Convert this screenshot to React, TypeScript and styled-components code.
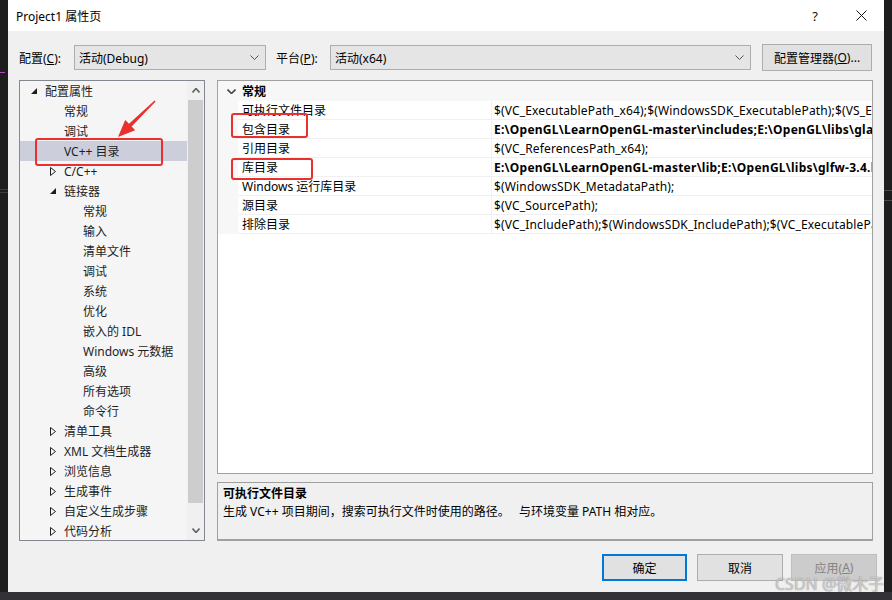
import React from "react";
import styled, { createGlobalStyle } from "styled-components";

const FONT = `"Noto Sans", "Noto Sans CJK SC", sans-serif`;

const GlobalStyle = createGlobalStyle`
  html, body { margin: 0; padding: 0; background: #1e1e1e; }
  * { box-sizing: border-box; }
`;

const Screen = styled.div`
  width: 892px;
  height: 600px;
  display: flex;
  flex-direction: column;
  background: #1e1e1e;
  position: relative;
  overflow: hidden;
  font-family: ${FONT};
  font-size: 12px;
  color: #000;
`;

const Middle = styled.div`
  display: flex;
  height: 592px;
`;

const SideStrip = styled.div<{ $w: number }>`
  width: ${(p) => p.$w}px;
  background: #1e1e1e;
  position: relative;
`;

const StripMark = styled.div<{ $top: number; $color: string; $w: number }>`
  position: absolute;
  left: 0;
  top: ${(p) => p.$top}px;
  width: ${(p) => p.$w}px;
  height: 1px;
  background: ${(p) => p.$color};
`;

const BottomStrip = styled.div`
  height: 8px;
  background: #333337;
`;

const Dialog = styled.div`
  width: 876px;
  background: #f0f0f0;
  display: flex;
  flex-direction: column;
  position: relative;
`;

const TitleBar = styled.div`
  height: 31px;
  background: #fff;
  display: flex;
  align-items: center;
  padding-left: 8px;
  font-size: 12px;
`;

const TitleText = styled.div`
  flex: 1;
`;

const TitleButton = styled.div`
  width: 46px;
  height: 31px;
  display: flex;
  align-items: center;
  justify-content: center;
  font-size: 13px;
  color: #111;
`;

const ConfigRow = styled.div`
  display: flex;
  align-items: center;
  height: 27px;
  margin-top: 13px;
  padding-left: 11px;
`;

const Label = styled.div<{ $w: number; $ml?: number }>`
  width: ${(p) => p.$w}px;
  margin-left: ${(p) => p.$ml ?? 0}px;
  white-space: nowrap;
`;

const U = styled.span`
  text-decoration: underline;
`;

const Select = styled.div<{ $w: number }>`
  width: ${(p) => p.$w}px;
  height: 25px;
  background: #e5e5e5;
  border: 1px solid #adadad;
  display: flex;
  align-items: center;
  padding: 0 6px 0 4px;
`;

const SelectText = styled.div`
  flex: 1;
`;

const Button = styled.div<{ $w: number; $ml?: number; $variant?: "default" | "primary" | "disabled" }>`
  width: ${(p) => p.$w}px;
  height: 27px;
  margin-left: ${(p) => p.$ml ?? 0}px;
  display: flex;
  align-items: center;
  justify-content: center;
  background: ${(p) => (p.$variant === "disabled" ? "#cccccc" : "#e1e1e1")};
  border: ${(p) =>
    p.$variant === "primary"
      ? "2px solid #0078d7"
      : p.$variant === "disabled"
      ? "1px solid #bfbfbf"
      : "1px solid #adadad"};
  color: ${(p) => (p.$variant === "disabled" ? "#838383" : "#000")};
  white-space: nowrap;
`;

const Body = styled.div`
  display: flex;
  gap: 12px;
  margin-top: 9px;
  padding-left: 11px;
  height: 461px;
`;

const Tree = styled.div`
  width: 186px;
  height: 461px;
  border: 1px solid #828790;
  background: #f5f5f5;
  display: flex;
`;

const TreeList = styled.div`
  flex: 1;
  display: flex;
  flex-direction: column;
  overflow: hidden;
`;

const TreeRow = styled.div<{ $level: number; $selected?: boolean }>`
  height: 20px;
  flex-shrink: 0;
  display: flex;
  align-items: center;
  padding-left: ${(p) => 25 + p.$level * 19}px;
  background: ${(p) => (p.$selected ? "#cccedb" : "transparent")};
  position: relative;
  white-space: nowrap;
  color: #1e1e1e;
`;

const Expander = styled.span`
  position: absolute;
  margin-left: -15px;
  width: 8px;
  height: 9px;
  display: flex;
  align-items: center;
  justify-content: center;
`;

const ScrollBar = styled.div`
  width: 17px;
  background: #f0f0f0;
  display: flex;
  flex-direction: column;
  align-items: center;
`;

const ScrollArrow = styled.div`
  height: 19px;
  width: 17px;
  display: flex;
  align-items: center;
  justify-content: center;
`;

const ScrollThumb = styled.div`
  width: 15px;
  height: 403px;
  background: #cdcdcd;
`;

const ScrollSpacer = styled.div`
  flex: 1;
`;

const RightCol = styled.div`
  width: 656px;
  display: flex;
  flex-direction: column;
  gap: 8px;
`;

const Grid = styled.div`
  height: 394px;
  border: 1px solid #a0a0a0;
  background: #fff;
  display: flex;
  flex-direction: column;
  overflow: hidden;
`;

const CategoryRow = styled.div`
  height: 20px;
  display: flex;
  align-items: center;
  background: #f7f7f7;
  font-weight: bold;
`;

const CategoryToggle = styled.div`
  width: 24px;
  display: flex;
  justify-content: center;
  padding-left: 3px;
`;

const PropRow = styled.div`
  height: 19px;
  display: flex;
  background: #f7f7f7;
`;

const Gutter = styled.div`
  width: 20px;
  flex-shrink: 0;
`;

const PropName = styled.div`
  width: 253px;
  flex-shrink: 0;
  background: #fff;
  border-bottom: 1px solid #f0f0f0;
  padding-left: 4px;
  display: flex;
  align-items: center;
  white-space: nowrap;
`;

const PropValue = styled.div<{ $bold?: boolean }>`
  flex: 1;
  min-width: 0;
  background: #fff;
  border-bottom: 1px solid #f0f0f0;
  border-left: 1px solid #f0f0f0;
  padding-left: 2px;
  display: flex;
  align-items: center;
  white-space: nowrap;
  overflow: hidden;
  letter-spacing: ${(p) => (p.$bold ? "0.25px" : "0.15px")};
  font-weight: ${(p) => (p.$bold ? "bold" : "normal")};
`;

const GridFill = styled.div`
  flex: 1;
  background: #fff;
`;

const Desc = styled.div`
  height: 59px;
  border: 1px solid #a0a0a0;
  border-bottom: 2px solid #a0a0a0;
  background: #f0f0f0;
  padding: 3px 5px;
  display: flex;
  flex-direction: column;
  gap: 2px;
`;

const DescTitle = styled.div`
  font-weight: bold;
  line-height: 16px;
`;

const DescText = styled.div`
  line-height: 16px;
  white-space: pre;
`;

const Footer = styled.div`
  display: flex;
  justify-content: flex-end;
  margin-top: 13px;
  padding-right: 7px;
`;

const RedBox = styled.div<{ $x: number; $y: number; $w: number; $h: number }>`
  position: absolute;
  left: ${(p) => p.$x}px;
  top: ${(p) => p.$y}px;
  width: ${(p) => p.$w}px;
  height: ${(p) => p.$h}px;
  border: 2px solid #e8302e;
  border-radius: 3px;
  pointer-events: none;
`;

const ArrowSvg = styled.svg`
  position: absolute;
  left: 0;
  top: 0;
  pointer-events: none;
`;

const Watermark = styled.div`
  position: absolute;
  left: 775px;
  top: 571px;
  font-family: "Noto Sans", "Noto Sans CJK SC", sans-serif;
  font-size: 16px;
  color: rgba(225, 225, 225, 0.8);
  text-shadow: 0 0 1px rgba(90, 90, 90, 0.9);
  white-space: nowrap;
  pointer-events: none;
`;

const Chevron = ({ dir = "down", color = "#555", w = 9, h = 5 }: { dir?: "down" | "up"; color?: string; w?: number; h?: number }) => (
  <svg width={w} height={h} viewBox={`0 0 ${w} ${h}`}>
    <polyline
      points={dir === "down" ? `0.5,0.5 ${w / 2},${h - 0.5} ${w - 0.5},0.5` : `0.5,${h - 0.5} ${w / 2},0.5 ${w - 0.5},${h - 0.5}`}
      fill="none"
      stroke={color}
      strokeWidth={dir === "down" && color === "#555" ? 1 : 1.6}
    />
  </svg>
);

const Expanded = () => (
  <svg width="6" height="6" viewBox="0 0 6 6">
    <polygon points="6,0 6,6 0,6" fill="#1e1e1e" />
  </svg>
);

const Collapsed = () => (
  <svg width="6" height="9" viewBox="0 0 6 9">
    <polygon points="0.5,0.5 5.5,4.5 0.5,8.5" fill="none" stroke="#1e1e1e" strokeWidth="1" />
  </svg>
);

type TreeItem = { label: string; level: number; exp?: "open" | "closed"; selected?: boolean };

const treeItems: TreeItem[] = [
  { label: "配置属性", level: 0, exp: "open" },
  { label: "常规", level: 1 },
  { label: "调试", level: 1 },
  { label: "VC++ 目录", level: 1, selected: true },
  { label: "C/C++", level: 1, exp: "closed" },
  { label: "链接器", level: 1, exp: "open" },
  { label: "常规", level: 2 },
  { label: "输入", level: 2 },
  { label: "清单文件", level: 2 },
  { label: "调试", level: 2 },
  { label: "系统", level: 2 },
  { label: "优化", level: 2 },
  { label: "嵌入的 IDL", level: 2 },
  { label: "Windows 元数据", level: 2 },
  { label: "高级", level: 2 },
  { label: "所有选项", level: 2 },
  { label: "命令行", level: 2 },
  { label: "清单工具", level: 1, exp: "closed" },
  { label: "XML 文档生成器", level: 1, exp: "closed" },
  { label: "浏览信息", level: 1, exp: "closed" },
  { label: "生成事件", level: 1, exp: "closed" },
  { label: "自定义生成步骤", level: 1, exp: "closed" },
  { label: "代码分析", level: 1, exp: "closed" },
];

const props: { name: string; value: string; bold?: boolean }[] = [
  { name: "可执行文件目录", value: "$(VC_ExecutablePath_x64);$(WindowsSDK_ExecutablePath);$(VS_ExecutablePath);$(MSBuild_ExecutablePath)" },
  { name: "包含目录", value: "E:\\OpenGL\\LearnOpenGL-master\\includes;E:\\OpenGL\\libs\\glad\\include;E:\\OpenGL\\libs", bold: true },
  { name: "引用目录", value: "$(VC_ReferencesPath_x64);" },
  { name: "库目录", value: "E:\\OpenGL\\LearnOpenGL-master\\lib;E:\\OpenGL\\libs\\glfw-3.4.bin.WIN64\\lib-vc2022", bold: true },
  { name: "Windows 运行库目录", value: "$(WindowsSDK_MetadataPath);" },
  { name: "源目录", value: "$(VC_SourcePath);" },
  { name: "排除目录", value: "$(VC_IncludePath);$(WindowsSDK_IncludePath);$(VC_ExecutablePath_x64);$(VC_LibraryPath_x64)" },
];

export default function App() {
  return (
    <Screen>
      <GlobalStyle />
      <Middle>
        <SideStrip $w={8}>
          <StripMark $top={72} $w={5} $color="#b04cc0" />
          <StripMark $top={189} $w={8} $color="#3c3c3c" />
          <StripMark $top={192} $w={8} $color="#3c3c3c" />
        </SideStrip>
        <Dialog>
          <TitleBar>
            <TitleText>Project1 属性页</TitleText>
            <TitleButton>?</TitleButton>
            <TitleButton>
              <svg width="11" height="11" viewBox="0 0 11 11">
                <path d="M0.5 0.5 L10.5 10.5 M10.5 0.5 L0.5 10.5" stroke="#111" strokeWidth="1" />
              </svg>
            </TitleButton>
          </TitleBar>

          <ConfigRow>
            <Label $w={55}>
              配置(<U>C</U>):
            </Label>
            <Select $w={192}>
              <SelectText>活动(Debug)</SelectText>
              <Chevron />
            </Select>
            <Label $w={54} $ml={10}>
              平台(<U>P</U>):
            </Label>
            <Select $w={421}>
              <SelectText>活动(x64)</SelectText>
              <Chevron />
            </Select>
            <Button $w={110} $ml={11}>
              配置管理器(<U>O</U>)...
            </Button>
          </ConfigRow>

          <Body>
            <Tree>
              <TreeList>
                {treeItems.map((it, i) => (
                  <TreeRow key={i} $level={it.level} $selected={it.selected}>
                    {it.exp && <Expander>{it.exp === "open" ? <Expanded /> : <Collapsed />}</Expander>}
                    {it.label}
                  </TreeRow>
                ))}
              </TreeList>
              <ScrollBar>
                <ScrollArrow>
                  <Chevron dir="up" color="#606060" w={8} h={5} />
                </ScrollArrow>
                <ScrollThumb />
                <ScrollSpacer />
                <ScrollArrow>
                  <Chevron dir="down" color="#606060" w={8} h={5} />
                </ScrollArrow>
              </ScrollBar>
            </Tree>

            <RightCol>
              <Grid>
                <CategoryRow>
                  <CategoryToggle>
                    <Chevron color="#444" w={9} h={5} />
                  </CategoryToggle>
                  常规
                </CategoryRow>
                {props.map((p, i) => (
                  <PropRow key={i}>
                    <Gutter />
                    <PropName>{p.name}</PropName>
                    <PropValue $bold={p.bold}>{p.value}</PropValue>
                  </PropRow>
                ))}
                <GridFill />
              </Grid>
              <Desc>
                <DescTitle>可执行文件目录</DescTitle>
                <DescText>{"生成 VC++ 项目期间，搜索可执行文件时使用的路径。   与环境变量 PATH 相对应。"}</DescText>
              </Desc>
            </RightCol>
          </Body>

          <Footer>
            <Button $w={85} $variant="primary">确定</Button>
            <Button $w={86} $ml={10}>取消</Button>
            <Button $w={86} $ml={8} $variant="disabled">
              应用(<U>A</U>)
            </Button>
          </Footer>

          <RedBox $x={27} $y={138} $w={128} $h={28} />
          <RedBox $x={223} $y={113} $w={77} $h={25} />
          <RedBox $x={223} $y={158} $w={82} $h={22} />
          <ArrowSvg width="200" height="160" viewBox="0 0 200 160">
            <polygon
              points="147.6,101.6 123.6,126.6 127.2,130.2 110,137 117.2,120.0 121.0,123.8 146.6,100.6"
              fill="#e8302e"
            />
          </ArrowSvg>
        </Dialog>
        <SideStrip $w={8}>
          <StripMark $top={190} $w={8} $color="#4a4a4a" />
          <StripMark $top={200} $w={8} $color="#4a4a4a" />
        </SideStrip>
      </Middle>
      <BottomStrip />
      <Watermark>CSDN @微木子</Watermark>
    </Screen>
  );
}
